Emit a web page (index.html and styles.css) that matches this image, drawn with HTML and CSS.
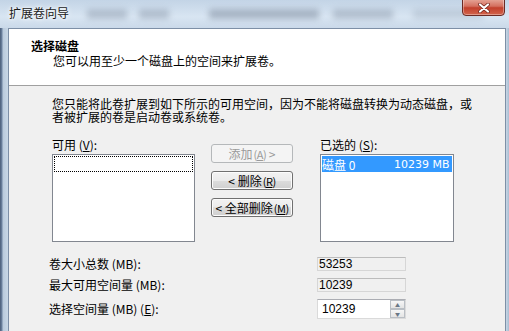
FILE: index.html
```html
<!DOCTYPE html>
<html lang="zh">
<head>
    <meta charset="UTF-8">
    <title>扩展卷向导</title>
    <link rel="stylesheet" href="styles.css">
</head>
<body>
    <div class="window">
        <div class="titlebar">
            <span class="title">扩展卷向导</span>
            <span class="blur b1"></span>
            <span class="blur b2"></span>
            <span class="blur b3"></span>
            <span class="blur b4"></span>
            <span class="blur b5"></span>
            <span class="close">
                <svg width="14" height="10" viewBox="0 0 14 10">
                    <path d="M3 1.5 L11 8.5 M11 1.5 L3 8.5" stroke="#6b2018" stroke-width="3.6" stroke-linecap="round"/>
                    <path d="M3 1.5 L11 8.5 M11 1.5 L3 8.5" stroke="#fff" stroke-width="2.2" stroke-linecap="round"/>
                </svg>
            </span>
        </div>
        <div class="frame">
            <div class="edge-left"></div>
            <div class="client">
                <div class="header">
                    <div class="header-title">选择磁盘</div>
                    <div class="header-sub">您可以用至少一个磁盘上的空间来扩展卷。</div>
                </div>
                <div class="body">
                    <p class="intro">您只能将此卷扩展到如下所示的可用空间，因为不能将磁盘转换为动态磁盘，或<br>者被扩展的卷是启动卷或系统卷。</p>

                    <div class="lists">
                        <div class="list-col">
                            <div class="list-label">可用 (<u>V</u>):</div>
                            <div class="listbox">
                                <div class="focus-row"></div>
                            </div>
                        </div>
                        <div class="buttons">
                            <button class="btn" disabled>添加<span class="key">(<u>A</u>)</span> &gt;</button>
                            <button class="btn">&lt; 删除<span class="key">(<u>R</u>)</span></button>
                            <button class="btn">&lt; 全部删除<span class="key">(<u>M</u>)</span></button>
                        </div>
                        <div class="list-col right">
                            <div class="list-label">已选的 (<u>S</u>):</div>
                            <div class="listbox">
                                <div class="item selected">
                                    <span class="item-name">磁盘 0</span>
                                    <span class="item-size">10239 MB</span>
                                </div>
                            </div>
                        </div>
                    </div>

                    <div class="fields">
                        <div class="field-label">卷大小总数 (MB):</div>
                        <div class="readonly">53253</div>
                        <div class="field-label">最大可用空间量 (MB):</div>
                        <div class="readonly">10239</div>
                        <div class="field-label">选择空间量 (MB) (<u>E</u>):</div>
                        <div class="spin">
                            <span class="spin-value">10239</span>
                            <span class="spin-btns">
                                <span class="spin-btn">▲</span>
                                <span class="spin-btn">▼</span>
                            </span>
                        </div>
                    </div>
                </div>
            </div>
            <div class="edge-right"></div>
        </div>
    </div>
</body>
</html>
```

FILE: styles.css
```css
body {
    margin: 0;
    padding: 0;
    width: 509px;
    height: 331px;
    overflow: hidden;
    font-family: "Noto Sans CJK SC", "Liberation Sans", sans-serif;
    font-size: 12px;
    color: #000;
    background: #b9c9da;
}

.window {
    display: flex;
    flex-direction: column;
    height: 331px;
}

/* 标题栏 (Aero 玻璃) */
.titlebar {
    height: 28px;
    display: flex;
    align-items: flex-start;
    background: linear-gradient(to bottom, #c3d4e6, #d8e5f2 60%, #cad9e9);
    overflow: hidden;
    position: relative;
}

.title {
    margin: 5px 0 0 9px;
    line-height: 16px;
    color: #1a1a1a;
    text-shadow: 0 0 6px #fff, 0 0 3px #fff;
}

.blur {
    height: 10px;
    margin-top: 9px;
    background: #8e9bad;
    opacity: 0.5;
    filter: blur(3px);
}

.b1 { width: 40px; margin-left: 18px; }
.b2 { width: 30px; margin-left: 12px; }
.b3 { width: 110px; margin-left: 40px; opacity: 0.65; }
.b4 { width: 60px; margin-left: 14px; }
.b5 { width: 70px; margin-left: 20px; opacity: 0.3; }

.close {
    position: absolute;
    top: -2px;
    right: 4px;
    width: 43px;
    height: 18px;
    border: 1px solid #6b2a24;
    border-radius: 0 0 4px 4px;
    background: linear-gradient(to bottom, #e6a89a, #d4705f 45%, #c2402c 55%, #d2644c);
    box-shadow: inset 0 0 0 1px rgba(255, 255, 255, 0.35);
    display: flex;
    align-items: center;
    justify-content: center;
    padding-top: 2px;
    box-sizing: border-box;
}

.frame {
    flex: 1;
    display: flex;
}

.edge-left {
    width: 8px;
    background: linear-gradient(to right, #4a5d78 0, #6f85a2 2px, #b9cadc 3px, #c8d7e6 8px);
}

.edge-right {
    width: 3px;
    background: linear-gradient(to right, #c8d7e6, #a9bdd2);
}

.client {
    flex: 1;
    background: #f0f0f0;
    border-left: 1px solid #7d8fa6;
    border-right: 1px solid #7d8fa6;
    border-top: 1px solid #7d8fa6;
}

/* 页眉 */
.header {
    height: 57px;
    background: #fff;
    border-bottom: 1px solid #a0a0a0;
    box-sizing: border-box;
    padding: 9px 0 0 22px;
}

.header-title {
    font-weight: bold;
    line-height: 15px;
}

.header-sub {
    padding-left: 22px;
    line-height: 15px;
}

/* 主体 */
.body {
    padding: 11px 0 0 43px;
}

.intro {
    margin: 0;
    line-height: 13px;
}

.lists {
    display: flex;
    margin-top: 15px;
}

.list-col {
    width: 143px;
    display: flex;
    flex-direction: column;
}

.list-col.right {
    width: 134px;
    margin-left: 27px;
}

.list-label {
    line-height: 14px;
    margin-bottom: 2px;
}

.listbox {
    height: 88px;
    box-sizing: border-box;
    border: 1px solid #828790;
    background: #fff;
    padding: 1px;
}

.focus-row {
    height: 16px;
    box-sizing: border-box;
    border: 1px dotted #000;
}

.item {
    height: 16px;
    display: flex;
    align-items: center;
    font-size: 11px;
    font-family: "DejaVu Sans", "Noto Sans CJK SC", sans-serif;
}

.item.selected {
    background: #3399ff;
    color: #fff;
}

.item-name {
    width: 72px;
    font-family: "Noto Sans CJK SC", sans-serif;
    font-size: 12px;
}

.buttons {
    width: 82px;
    margin-left: 16px;
    padding-top: 6px;
    display: flex;
    flex-direction: column;
    gap: 8px;
}

.btn {
    height: 19px;
    padding: 0;
    font-family: "Noto Sans CJK SC", sans-serif;
    font-size: 12px;
    line-height: 15px;
    color: #000;
    white-space: nowrap;
    border: 1px solid #707070;
    border-radius: 3px;
    background: linear-gradient(to bottom, #f2f2f2, #ebebeb 50%, #dddddd 50%, #cfcfcf);
    box-shadow: inset 0 0 0 1px #fcfcfc;
}

.btn .key {
    font-size: 11px;
    letter-spacing: -0.5px;
    margin-left: 1px;
}

.btn:disabled {
    color: #9a9a9a;
    border-color: #b5b8ba;
    background: #f4f4f4;
    box-shadow: none;
}

.btn u,
.list-label u,
.field-label u {
    text-decoration-thickness: 1px;
}

/* 数值字段 */
.fields {
    display: grid;
    grid-template-columns: 268px 89px;
    grid-template-rows: 14px 14px 20px;
    row-gap: 7px;
    margin: 15px 0 0 -3px;
    align-items: center;
}

.field-label {
    line-height: 14px;
}

.readonly {
    height: 14px;
    box-sizing: border-box;
    border: 1px solid #d6d6d6;
    border-top-color: #bcbcbc;
    padding-left: 1px;
    line-height: 12px;
    font-family: "Liberation Sans", sans-serif;
    font-size: 12px;
}

.spin {
    height: 20px;
    box-sizing: border-box;
    border: 1px solid #dadada;
    border-top-color: #abadb3;
    background: #fff;
    display: flex;
    align-items: center;
    justify-content: space-between;
}

.spin-value {
    padding-left: 4px;
    font-family: "Liberation Sans", sans-serif;
}

.spin-btns {
    display: flex;
    flex-direction: column;
    width: 15px;
    height: 18px;
}

.spin-btn {
    flex: 1;
    box-sizing: border-box;
    border: 1px solid #b9bec4;
    background: linear-gradient(to bottom, #f6f6f6, #e4e4e4);
    color: #6a7785;
    font-size: 5px;
    line-height: 7px;
    text-align: center;
}
```
